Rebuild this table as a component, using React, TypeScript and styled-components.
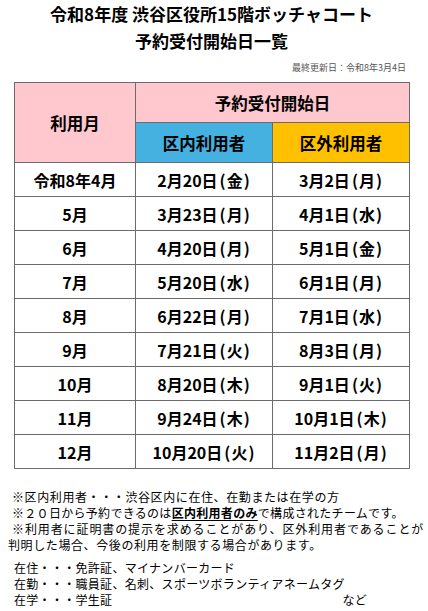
import React from "react";
import styled, { createGlobalStyle } from "styled-components";

const Global = createGlobalStyle`
  html, body { margin: 0; padding: 0; background: #ffffff; }
  body { font-family: "Noto Sans CJK JP", "Noto Sans", sans-serif; color: #000; }
`;

const Page = styled.div`
  width: 428px;
  height: 611px;
  overflow: hidden;
  display: flex;
  flex-direction: column;
`;

const Title = styled.h1`
  margin: 0;
  width: 423px;
  text-align: center;
  font-size: 17px;
  font-weight: 700;
  line-height: 27px;
`;

const Updated = styled.div`
  margin-top: 8px;
  width: 406px;
  text-align: right;
  font-size: 9px;
  line-height: 12px;
  color: #555;
`;

const Table = styled.table`
  margin: 8px 0 0 14px;
  width: 395px;
  border-collapse: collapse;
  table-layout: fixed;
  font-weight: 700;
`;

type Tone = "pink" | "blue" | "gold";
const bg: Record<Tone, string> = {
  pink: "#ffc7ce",
  blue: "#45b1e1",
  gold: "#ffc000",
};

const HeadCell = styled.th<{ $tone: Tone }>`
  background: ${(p) => bg[p.$tone]};
  border: 1px solid #6b6b6b;
  height: 39px;
  padding: 0;
  font-size: 16.5px;
  font-weight: 700;
  text-align: center;
  vertical-align: middle;
`;

const Cell = styled.td`
  border: 1px solid #6b6b6b;
  height: 33px;
  padding: 0;
  font-size: 16px;
  text-align: center;
  vertical-align: middle;
  white-space: nowrap;
`;

const Weekday = styled.span`
  margin-left: 2px;
  letter-spacing: 1px;
`;

const Notes = styled.div`
  margin-top: 20px;
  display: flex;
  flex-direction: column;
  font-size: 12px;
  line-height: 16px;
  letter-spacing: 0.6px;
  white-space: nowrap;
`;

const NoteLine = styled.div<{ $indent: number; $spacing?: number }>`
  padding-left: ${(p) => p.$indent}px;
  letter-spacing: ${(p) => (p.$spacing ?? 0.6)}px;
`;

const Strong = styled.span`
  font-weight: 700;
  text-decoration: underline;
  text-underline-offset: 2px;
`;

const Examples = styled.div`
  margin-top: 7px;
  display: flex;
  flex-direction: column;
  font-size: 12px;
  line-height: 16px;
  letter-spacing: 0.3px;
  white-space: nowrap;
  padding-left: 14px;
`;

const ExampleLine = styled.div`
  display: flex;
  width: 353px;
  justify-content: space-between;
`;

type Day = [string, string];
const rows: [string, Day, Day][] = [
  ["令和8年4月", ["2月20日", "金"], ["3月2日", "月"]],
  ["5月", ["3月23日", "月"], ["4月1日", "水"]],
  ["6月", ["4月20日", "月"], ["5月1日", "金"]],
  ["7月", ["5月20日", "水"], ["6月1日", "月"]],
  ["8月", ["6月22日", "月"], ["7月1日", "水"]],
  ["9月", ["7月21日", "火"], ["8月3日", "月"]],
  ["10月", ["8月20日", "木"], ["9月1日", "火"]],
  ["11月", ["9月24日", "木"], ["10月1日", "木"]],
  ["12月", ["10月20日", "火"], ["11月2日", "月"]],
];

function DateText({ d }: { d: Day }) {
  return (
    <>
      {d[0]}
      <Weekday>({d[1]})</Weekday>
    </>
  );
}

export default function App() {
  return (
    <Page>
      <Global />
      <Title>
        令和8年度 渋谷区役所15階ボッチャコート
        <br />
        予約受付開始日一覧
      </Title>
      <Updated>最終更新日：令和8年3月4日</Updated>
      <Table>
        <colgroup>
          <col style={{ width: "121px" }} />
          <col style={{ width: "137px" }} />
          <col style={{ width: "137px" }} />
        </colgroup>
        <thead>
          <tr>
            <HeadCell $tone="pink" rowSpan={2}>
              利用月
            </HeadCell>
            <HeadCell $tone="pink" colSpan={2}>
              予約受付開始日
            </HeadCell>
          </tr>
          <tr>
            <HeadCell $tone="blue">区内利用者</HeadCell>
            <HeadCell $tone="gold">区外利用者</HeadCell>
          </tr>
        </thead>
        <tbody>
          {rows.map((r) => (
            <tr key={r[0]}>
              <Cell>{r[0]}</Cell>
              <Cell>
                <DateText d={r[1]} />
              </Cell>
              <Cell>
                <DateText d={r[2]} />
              </Cell>
            </tr>
          ))}
        </tbody>
      </Table>
      <Notes>
        <NoteLine $indent={12}>※区内利用者・・・渋谷区内に在住、在勤または在学の方</NoteLine>
        <NoteLine $indent={12} $spacing={0.3}>
          ※２０日から予約できるのは<Strong>区内利用者のみ</Strong>で構成されたチームです。
        </NoteLine>
        <NoteLine $indent={12} $spacing={0.9}>
          ※利用者に証明書の提示を求めることがあり、区外利用者であることが
        </NoteLine>
        <NoteLine $indent={8}>判明した場合、今後の利用を制限する場合があります。</NoteLine>
      </Notes>
      <Examples>
        <div>在住・・・免許証、マイナンバーカード</div>
        <div>在勤・・・職員証、名刺、スポーツボランティアネームタグ</div>
        <ExampleLine>
          <span>在学・・・学生証</span>
          <span>など</span>
        </ExampleLine>
      </Examples>
    </Page>
  );
}
